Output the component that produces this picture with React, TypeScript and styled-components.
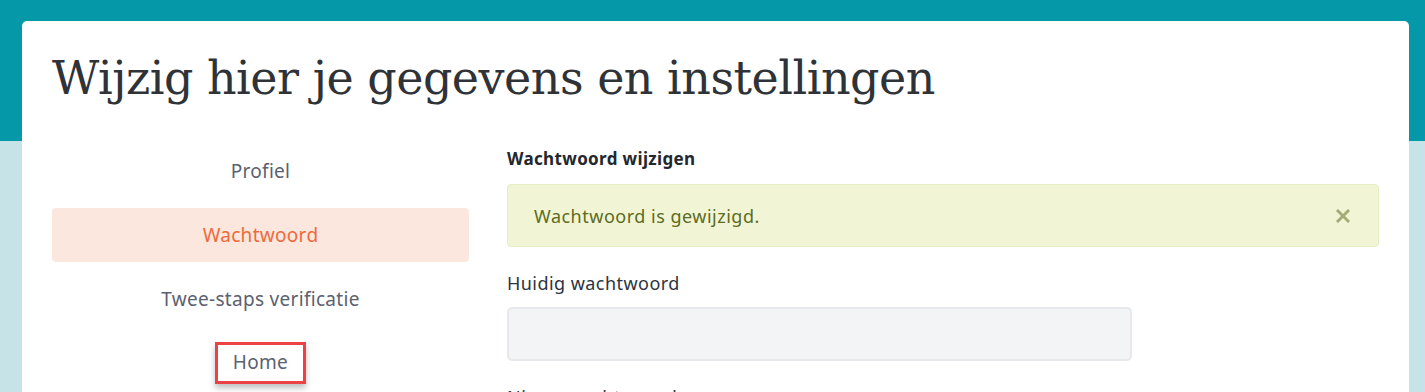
import styled, { createGlobalStyle } from "styled-components";

const GlobalStyle = createGlobalStyle`
  body {
    margin: 0;
    font-family: "Noto Sans", "Liberation Sans", sans-serif;
  }
`;

const Page = styled.div`
  height: 392px;
  box-sizing: border-box;
  overflow: hidden;
  background: linear-gradient(#0598a9 0, #0598a9 141px, #c6e4e7 141px);
  padding: 21px 16px 0 22px;
`;

const Card = styled.div`
  background: #ffffff;
  border-radius: 5px;
  padding: 26px 30px 30px 30px;
  min-height: 500px;
`;

const Title = styled.h1`
  margin: 0;
  font-family: "DejaVu Serif", "Liberation Serif", serif;
  font-weight: 400;
  font-size: 46px;
  line-height: 62px;
  letter-spacing: -0.5px;
  color: #2f3338;
`;

const Columns = styled.div`
  display: grid;
  grid-template-columns: 417px 1fr;
  column-gap: 38px;
  margin-top: 35px;
`;

const Menu = styled.nav`
  display: flex;
  flex-direction: column;
  gap: 10px;
`;

const MenuItem = styled.a<{ $active?: boolean }>`
  display: flex;
  align-items: center;
  justify-content: center;
  height: 54px;
  border-radius: 4px;
  font-size: 19px;
  letter-spacing: 0.3px;
  text-decoration: none;
  cursor: pointer;
  color: ${p => (p.$active ? "#ee6a3b" : "#5a6170")};
  background: ${p => (p.$active ? "#fce7de" : "transparent")};
`;

const Highlight = styled.span`
  display: inline-block;
  padding: 4px 15px 6px;
  border: 3px solid #ec4245;
  box-shadow: 0 4px 6px rgba(0, 0, 0, 0.25);
`;

const Content = styled.section`
  display: flex;
  flex-direction: column;
`;

const SectionTitle = styled.h2`
  margin: 3px 0 14px;
  font-size: 17px;
  font-weight: 700;
  line-height: 23px;
  letter-spacing: 0.35px;
  color: #23272e;
`;

const Alert = styled.div`
  display: flex;
  align-items: center;
  justify-content: space-between;
  height: 63px;
  box-sizing: border-box;
  padding: 0 28px 0 26px;
  background: #f1f5d6;
  border: 1px solid #e5edc2;
  border-radius: 4px;
  color: #5d6b21;
  font-size: 18px;
  letter-spacing: 0.5px;
`;

const CloseButton = styled.button`
  border: 0;
  background: none;
  padding: 0;
  cursor: pointer;
  display: flex;
  align-items: center;
`;

const Label = styled.label`
  display: block;
  margin-top: 24px;
  font-size: 18px;
  line-height: 24px;
  letter-spacing: 0.45px;
  color: #2d3441;
`;

const Input = styled.input`
  display: block;
  width: 625px;
  height: 54px;
  box-sizing: border-box;
  margin-top: 12px;
  background: #f3f4f6;
  border: 2px solid #e6e8ec;
  border-radius: 5px;
  font-size: 16px;
  padding: 0 14px;
`;

const CloseIcon = () => (
  <svg width="14" height="14" viewBox="0 0 14 14">
    <path d="M2 2 L12 12 M12 2 L2 12" stroke="#a4ad78" strokeWidth="3" strokeLinecap="square" />
  </svg>
);

export default function App() {
  return (
    <>
      <GlobalStyle />
      <Page>
        <Card>
          <Title>Wijzig hier je gegevens en instellingen</Title>
          <Columns>
            <Menu>
              <MenuItem>Profiel</MenuItem>
              <MenuItem $active>Wachtwoord</MenuItem>
              <MenuItem>Twee-staps verificatie</MenuItem>
              <MenuItem>
                <Highlight>Home</Highlight>
              </MenuItem>
            </Menu>
            <Content>
              <SectionTitle>Wachtwoord wijzigen</SectionTitle>
              <Alert>
                <span>Wachtwoord is gewijzigd.</span>
                <CloseButton aria-label="Sluiten">
                  <CloseIcon />
                </CloseButton>
              </Alert>
              <Label>Huidig wachtwoord</Label>
              <Input type="password" />
              <Label>Nieuw wachtwoord</Label>
              <Input type="password" />
            </Content>
          </Columns>
        </Card>
      </Page>
    </>
  );
}
